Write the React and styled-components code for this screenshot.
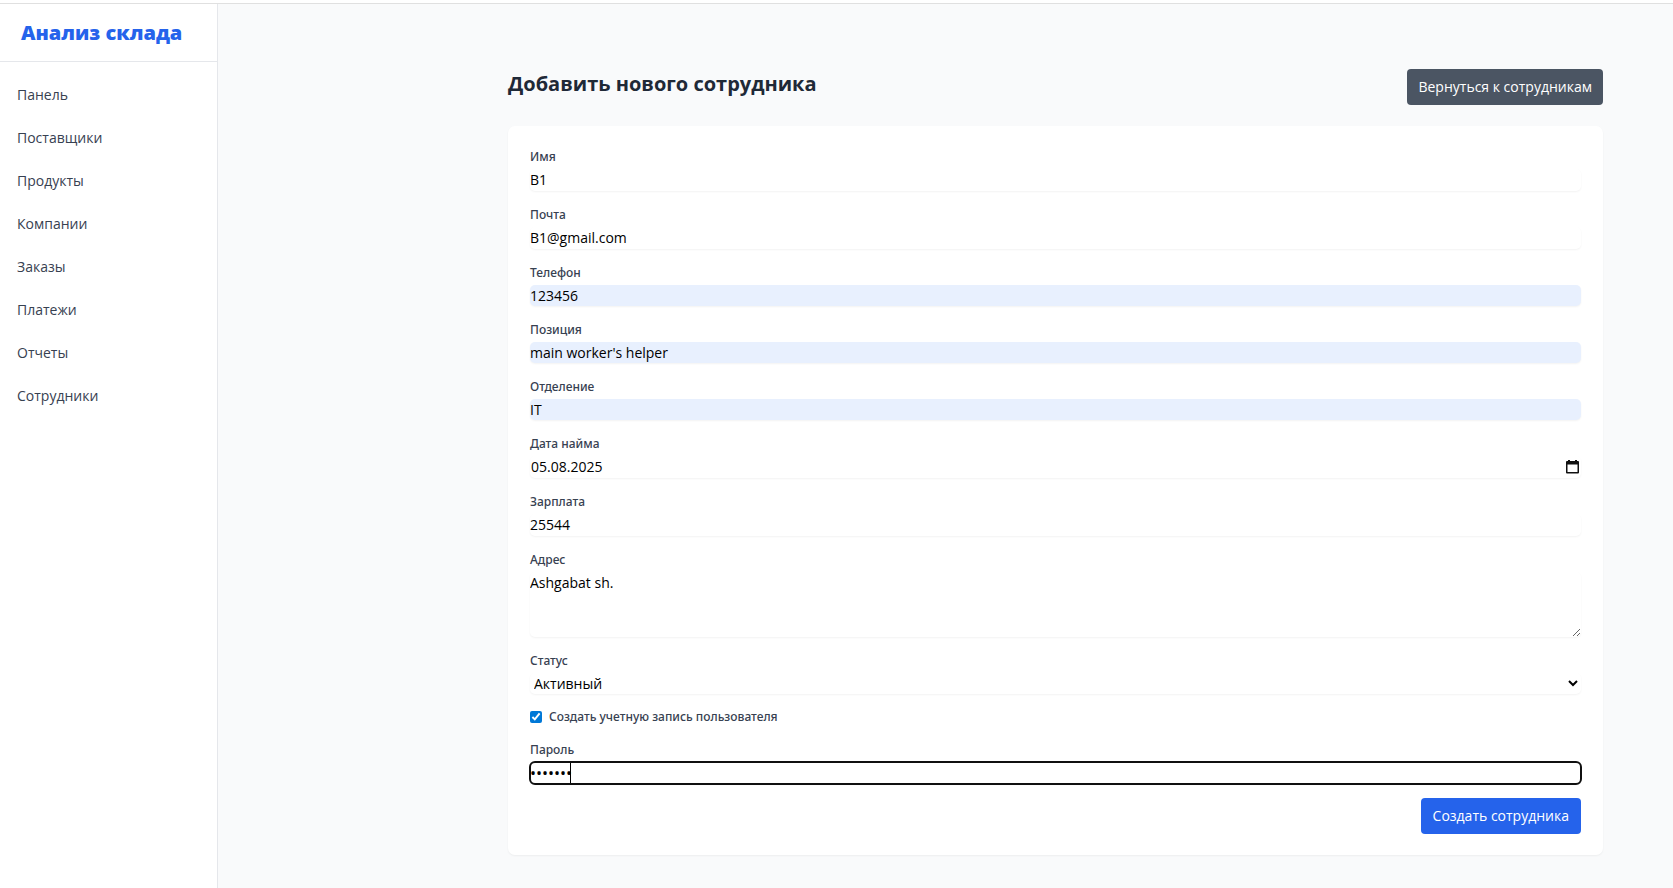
import React, { useEffect, useRef } from "react";
import styled, { createGlobalStyle } from "styled-components";

const GlobalStyle = createGlobalStyle`
  *, *::before, *::after { box-sizing: border-box; }
  body {
    margin: 0;
    background: #f9fafb;
    color: #1f2937;
    font-family: "Segoe UI", "Open Sans", "Noto Sans", sans-serif;
    font-size: 14px;
    line-height: 22px;
  }
  h1, h2, p, ul { margin: 0; padding: 0; }
  button, input, select, textarea { font: inherit; color: #000; }
`;

const Page = styled.div`
  display: flex;
  border-top: 1px solid #e0e0e0;
  box-shadow: 0 -3px 0 #fff;
  margin-top: 3px;
  min-height: calc(100vh - 3px);
`;

const Sidebar = styled.aside`
  flex: 0 0 218px;
  background: #fff;
  border-right: 1px solid #e5e7eb;
`;

const Brand = styled.div`
  padding: 14px 21px;
  border-bottom: 1px solid #e5e7eb;
`;

const BrandName = styled.h1`
  font-size: 20px;
  line-height: 29px;
  font-weight: 800;
  color: #2563eb;
  white-space: nowrap;
`;

const Nav = styled.ul`
  list-style: none;
  display: flex;
  flex-direction: column;
  gap: 7px;
  padding: 15px 0;
`;

const NavLink = styled.a`
  display: block;
  padding: 7px 17px;
  color: #374151;
  text-decoration: none;
`;

const Main = styled.main`
  flex: 1;
  min-width: 0;
  padding: 65px 70px 32px 290px;
`;

const Header = styled.header`
  display: flex;
  justify-content: space-between;
  align-items: flex-start;
  margin-bottom: 21px;
`;

const Title = styled.h2`
  font-size: 20px;
  line-height: 29px;
  font-weight: 700;
  color: #1f2937;
`;

const Button = styled.button`
  padding: 7px ${(p) => (p.$primary ? "12px" : "11px")};
  border: 0;
  border-radius: 4px;
  background: ${(p) => (p.$primary ? "#2563eb" : "#4b5563")};
  color: #fff;
  cursor: pointer;
`;

const Card = styled.form`
  display: flex;
  flex-direction: column;
  gap: 14px;
  padding: 21px 22px;
  background: #fff;
  border-radius: 7px;
  box-shadow: 0 1px 2px rgba(0, 0, 0, 0.05);
`;

const Field = styled.div`
  display: flex;
  flex-direction: column;
  gap: 2px;
`;

const Label = styled.label`
  font-family: "Segoe UI", "Noto Sans", "Open Sans", sans-serif;
  font-size: 12px;
  line-height: 20px;
  font-weight: 500;
  color: #374151;
`;

const control = `
  display: block;
  width: 100%;
  margin: 0;
  padding: 0;
  border: 0;
  border-radius: 5px;
  box-shadow: 0 1px 2px rgba(0, 0, 0, 0.05);
`;

const Input = styled.input`
  ${control}
  height: ${(p) => (p.$filled ? "21px" : "22px")};
  background: ${(p) => (p.$filled ? "#e8f0fe" : "#fff")};
  &:focus { outline: 2px solid #101010; outline-offset: -1px; }
`;

const PasswordBox = styled.div`
  position: relative;
`;

const PasswordInput = styled(Input)`
  font-size: 16px;
  caret-color: transparent;
  &:focus + span { visibility: visible; }
`;

const Caret = styled.span`
  position: absolute;
  left: 40px;
  top: 1px;
  bottom: 1px;
  width: 1px;
  background: #000;
  visibility: hidden;
  pointer-events: none;
`;

const TextArea = styled.textarea`
  ${control}
  height: 65px;
  background: #fff;
  resize: vertical;
`;

const Select = styled.select`
  ${control}
  height: 21px;
  background: #fff;
`;

const DateBox = styled.div`
  ${control}
  display: flex;
  align-items: center;
  padding: 0 2px 0 1px;
`;

const DateInput = styled.input`
  flex: 1;
  min-width: 0;
  height: 22px;
  padding: 0;
  border: 0;
  background: transparent;
`;

const IconButton = styled.button`
  display: flex;
  padding: 0;
  border: 0;
  background: none;
`;

const CheckRow = styled.div`
  display: flex;
  align-items: center;
  gap: 7px;
  height: 18px;
`;

const Checkbox = styled.input`
  width: 12px;
  height: 12px;
  margin: 0;
  accent-color: #0078d7;
`;

const Actions = styled.div`
  display: flex;
  justify-content: flex-end;
`;

const links = ["Панель", "Поставщики", "Продукты", "Компании", "Заказы", "Платежи", "Отчеты", "Сотрудники"];

const fields = [
  { id: "name", label: "Имя", value: "B1" },
  { id: "email", label: "Почта", value: "B1@gmail.com", type: "email" },
  { id: "phone", label: "Телефон", value: "123456", filled: true },
  { id: "position", label: "Позиция", value: "main worker's helper", filled: true },
  { id: "department", label: "Отделение", value: "IT", filled: true },
];

function CalendarIcon() {
  return (
    <svg width="13" height="14" viewBox="0 0 13 14" aria-hidden="true">
      <path d="M2 0h2v1h5V0h2v1h1a1 1 0 0 1 1 1v10.500a1 1 0 0 1-1 1H1a1 1 0 0 1-1-1V2a1 1 0 0 1 1-1h1zM1.500 4.500V12h10V4.500z" fill="#101010" />
    </svg>
  );
}

export default function App() {
  const password = useRef(null);
  useEffect(() => {
    const el = password.current;
    el.focus();
    el.setSelectionRange(el.value.length, el.value.length);
  }, []);

  return (
    <>
      <GlobalStyle />
      <Page>
        <Sidebar>
          <Brand>
            <BrandName>Анализ склада</BrandName>
          </Brand>
          <nav>
            <Nav>
              {links.map((l) => (
                <li key={l}><NavLink href="#">{l}</NavLink></li>
              ))}
            </Nav>
          </nav>
        </Sidebar>
        <Main>
          <Header>
            <Title>Добавить нового сотрудника</Title>
            <Button type="button">Вернуться к сотрудникам</Button>
          </Header>
          <Card onSubmit={(e) => e.preventDefault()}>
            {fields.map((f) => (
              <Field key={f.id}>
                <Label htmlFor={f.id}>{f.label}</Label>
                <Input id={f.id} type={f.type || "text"} defaultValue={f.value} $filled={f.filled} />
              </Field>
            ))}
            <Field>
              <Label htmlFor="hired">Дата найма</Label>
              <DateBox>
                <DateInput id="hired" type="text" defaultValue="05.08.2025" />
                <IconButton type="button" aria-label="Выбрать дату"><CalendarIcon /></IconButton>
              </DateBox>
            </Field>
            <Field>
              <Label htmlFor="salary">Зарплата</Label>
              <Input id="salary" type="text" inputMode="numeric" defaultValue="25544" />
            </Field>
            <Field>
              <Label htmlFor="address">Адрес</Label>
              <TextArea id="address" defaultValue="Ashgabat sh." />
            </Field>
            <Field>
              <Label htmlFor="status">Статус</Label>
              <Select id="status" defaultValue="active">
                <option value="active">Активный</option>
              </Select>
            </Field>
            <CheckRow>
              <Checkbox id="account" type="checkbox" defaultChecked />
              <Label htmlFor="account">Создать учетную запись пользователя</Label>
            </CheckRow>
            <Field>
              <Label htmlFor="password">Пароль</Label>
              <PasswordBox>
                <PasswordInput ref={password} id="password" type="password" defaultValue="1234567" />
                <Caret />
              </PasswordBox>
            </Field>
            <Actions>
              <Button type="submit" $primary>Создать сотрудника</Button>
            </Actions>
          </Card>
        </Main>
      </Page>
    </>
  );
}
